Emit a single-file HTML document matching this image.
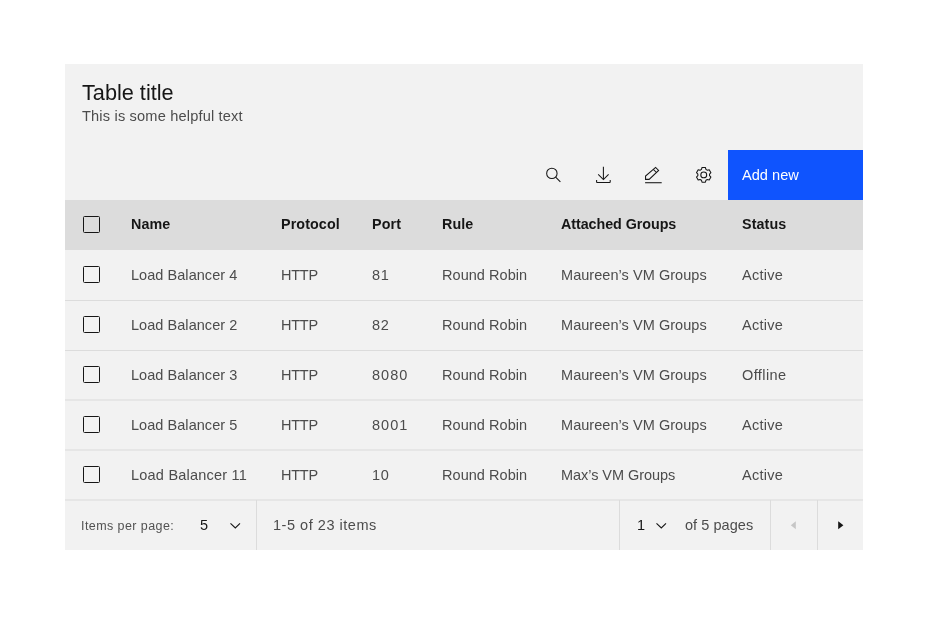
<!DOCTYPE html>
<html><head><meta charset="utf-8">
<style>
*{box-sizing:border-box;margin:0;padding:0}
html,body{width:928px;height:618px;background:#fff;overflow:hidden}
body{font-family:"Liberation Sans",sans-serif;color:#161616;position:relative}
.c{position:absolute;left:65px;top:64px;width:798px;height:486px;background:#f2f2f2}
.t{position:absolute;white-space:nowrap;line-height:1;will-change:transform}
.title{left:82px;top:82px;font-size:21.7px;color:#161616}
.desc{left:82px;top:109px;font-size:14.6px;color:#4c4c4c;letter-spacing:.17px}
.btn{position:absolute;left:728px;top:150px;width:135px;height:50px;background:#0f54fe}
.hdr{position:absolute;left:65px;top:200px;width:798px;height:50px;background:#dcdcdc}
.row{position:absolute;left:65px;width:798px;height:1px;background:#dcdcdc}
.rowb{position:absolute;left:65px;width:798px;height:1px;background:#e6e6e6}
.cb{position:absolute;left:83px;width:17px;height:17px;border:1.3px solid #161616;border-radius:1.5px}
.h{font-weight:bold;font-size:14.3px;color:#161616;letter-spacing:.1px}
.d{font-size:14.5px;color:#4c4c4c;letter-spacing:.05px}
.pg{position:absolute;left:65px;top:500px;width:798px;height:50px}
.vl{position:absolute;top:500px;width:1px;height:50px;background:#dcdcdc}
</style></head><body>
<div class="c"></div>
<div class="t title">Table title</div>
<div class="t desc">This is some helpful text</div>

<!-- toolbar icons -->
<svg style="position:absolute;left:0;top:0" width="928" height="618" viewBox="0 0 928 618">
<g fill="none" stroke="#161616" stroke-width="1.05">
<circle cx="551.87" cy="173.4" r="5.2"/>
<path d="M555.6 177.1 L560.4 181.9"/>
<path d="M603.4 166.7 V179"/>
<path d="M598.2 174.3 L603.4 179.5 L608.6 174.3"/>
<path d="M596.6 179.9 V181.9 Q596.6 182.45 597.15 182.45 H609.65 Q610.2 182.45 610.2 181.9 V179.9"/>
<path d="M645.55 179.35 V176 L655.6 167.4 L658.6 170.4 L649.1 179.35 Z"/>
<path d="M653.3 169.3 L656.5 172.5"/>
</g>
<rect x="645.1" y="182.2" width="16.6" height="1.05" fill="#161616"/>
<path d="M705.91 169.38 L705.40 167.49 L702.00 167.49 L701.49 169.38 L700.07 170.20 L698.18 169.70 L696.48 172.64 L697.86 174.03 L697.86 175.67 L696.48 177.06 L698.18 180.00 L700.07 179.50 L701.49 180.32 L702.00 182.21 L705.40 182.21 L705.91 180.32 L707.33 179.50 L709.22 180.00 L710.92 177.06 L709.54 175.67 L709.54 174.03 L710.92 172.64 L709.22 169.70 L707.33 170.20 Z" fill="none" stroke="#161616" stroke-width="1.05" stroke-linejoin="round"/>
<circle cx="703.75" cy="174.9" r="2.95" fill="none" stroke="#161616" stroke-width="1.05"/>
</svg>

<div class="btn"></div>
<div class="t" style="left:742px;top:168px;font-size:14.6px;color:#fff;letter-spacing:0px">Add new</div>

<div class="hdr"></div>
<div class="cb" style="top:216px"></div>
<div class="t h" style="left:131px;top:217px">Name</div>
<div class="t h" style="left:281px;top:217px">Protocol</div>
<div class="t h" style="left:372px;top:217px">Port</div>
<div class="t h" style="left:442px;top:217px">Rule</div>
<div class="t h" style="left:561px;top:217px;letter-spacing:-.05px">Attached Groups</div>
<div class="t h" style="left:742px;top:217px">Status</div>

<div class="row" style="top:300px"></div>
<div class="row" style="top:350px"></div>
<div class="rowb" style="top:399px"></div><div class="rowb" style="top:400px"></div>
<div class="rowb" style="top:449px"></div><div class="rowb" style="top:450px"></div>
<div class="rowb" style="top:499px"></div><div class="rowb" style="top:500px"></div>

<div class="cb" style="top:266px"></div>
<div class="t d" style="left:131px;top:268px">Load Balancer 4</div>
<div class="t d" style="left:281px;top:268px;letter-spacing:-.25px">HTTP</div>
<div class="t d" style="left:372px;top:268px;letter-spacing:.6px">81</div>
<div class="t d" style="left:442px;top:268px">Round Robin</div>
<div class="t d" style="left:561px;top:268px">Maureen’s VM Groups</div>
<div class="t d" style="left:742px;top:268px;letter-spacing:.25px">Active</div>

<div class="cb" style="top:316px"></div>
<div class="t d" style="left:131px;top:318px">Load Balancer 2</div>
<div class="t d" style="left:281px;top:318px;letter-spacing:-.25px">HTTP</div>
<div class="t d" style="left:372px;top:318px;letter-spacing:.6px">82</div>
<div class="t d" style="left:442px;top:318px">Round Robin</div>
<div class="t d" style="left:561px;top:318px">Maureen’s VM Groups</div>
<div class="t d" style="left:742px;top:318px;letter-spacing:.25px">Active</div>

<div class="cb" style="top:366px"></div>
<div class="t d" style="left:131px;top:368px">Load Balancer 3</div>
<div class="t d" style="left:281px;top:368px;letter-spacing:-.25px">HTTP</div>
<div class="t d" style="left:372px;top:368px;letter-spacing:1px">8080</div>
<div class="t d" style="left:442px;top:368px">Round Robin</div>
<div class="t d" style="left:561px;top:368px">Maureen’s VM Groups</div>
<div class="t d" style="left:742px;top:368px;letter-spacing:.4px">Offline</div>

<div class="cb" style="top:416px"></div>
<div class="t d" style="left:131px;top:418px">Load Balancer 5</div>
<div class="t d" style="left:281px;top:418px;letter-spacing:-.25px">HTTP</div>
<div class="t d" style="left:372px;top:418px;letter-spacing:1px">8001</div>
<div class="t d" style="left:442px;top:418px">Round Robin</div>
<div class="t d" style="left:561px;top:418px">Maureen’s VM Groups</div>
<div class="t d" style="left:742px;top:418px;letter-spacing:.25px">Active</div>

<div class="cb" style="top:466px"></div>
<div class="t d" style="left:131px;top:468px;letter-spacing:.22px">Load Balancer 11</div>
<div class="t d" style="left:281px;top:468px;letter-spacing:-.25px">HTTP</div>
<div class="t d" style="left:372px;top:468px;letter-spacing:.6px">10</div>
<div class="t d" style="left:442px;top:468px">Round Robin</div>
<div class="t d" style="left:561px;top:468px;letter-spacing:-.05px">Max’s VM Groups</div>
<div class="t d" style="left:742px;top:468px;letter-spacing:.25px">Active</div>

<!-- pagination -->
<div class="vl" style="left:256px"></div>
<div class="vl" style="left:619px"></div>
<div class="vl" style="left:770px"></div>
<div class="vl" style="left:817px"></div>
<div class="t" style="left:81px;top:520px;font-size:12.5px;color:#525252;letter-spacing:.42px">Items per page:</div>
<div class="t d" style="left:200px;top:518px;color:#161616">5</div>
<svg style="position:absolute;left:229px;top:520px" width="12" height="10" viewBox="0 0 12 10" fill="none" stroke="#161616" stroke-width="1.1"><path d="M1.5 3.3 L6.3 8 L11 3.3"/></svg>
<div class="t d" style="left:273px;top:518px;letter-spacing:.53px">1-5 of 23 items</div>
<div class="t d" style="left:637px;top:518px;color:#161616">1</div>
<svg style="position:absolute;left:655px;top:520px" width="12" height="10" viewBox="0 0 12 10" fill="none" stroke="#161616" stroke-width="1.1"><path d="M1.5 3.3 L6.3 8 L11 3.3"/></svg>
<div class="t d" style="left:684.5px;top:518px">of 5 pages</div>
<svg style="position:absolute;left:789px;top:520px" width="8" height="10" viewBox="0 0 8 10"><path d="M6.8 1.2 L1.8 5.2 L6.8 9.2 Z" fill="#c6c6c6"/></svg>
<svg style="position:absolute;left:837px;top:520px" width="8" height="10" viewBox="0 0 8 10"><path d="M1.2 1.2 L6.4 5.2 L1.2 9.2 Z" fill="#161616"/></svg>
</body></html>
